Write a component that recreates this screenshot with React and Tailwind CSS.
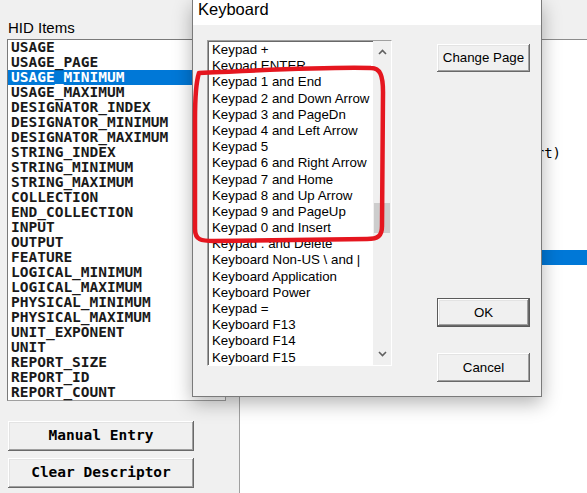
import React from 'react';

const HID_ITEMS = [
  'USAGE', 'USAGE_PAGE', 'USAGE_MINIMUM', 'USAGE_MAXIMUM', 'DESIGNATOR_INDEX',
  'DESIGNATOR_MINIMUM', 'DESIGNATOR_MAXIMUM', 'STRING_INDEX', 'STRING_MINIMUM',
  'STRING_MAXIMUM', 'COLLECTION', 'END_COLLECTION', 'INPUT', 'OUTPUT', 'FEATURE',
  'LOGICAL_MINIMUM', 'LOGICAL_MAXIMUM', 'PHYSICAL_MINIMUM', 'PHYSICAL_MAXIMUM',
  'UNIT_EXPONENT', 'UNIT', 'REPORT_SIZE', 'REPORT_ID', 'REPORT_COUNT',
];

const KEY_USAGES = [
  'Keypad +', 'Keypad ENTER', 'Keypad 1 and End', 'Keypad 2 and Down Arrow',
  'Keypad 3 and PageDn', 'Keypad 4 and Left Arrow', 'Keypad 5',
  'Keypad 6 and Right Arrow', 'Keypad 7 and Home', 'Keypad 8 and Up Arrow',
  'Keypad 9 and PageUp', 'Keypad 0 and Insert', 'Keypad . and Delete',
  'Keyboard Non-US \\ and |', 'Keyboard Application', 'Keyboard Power',
  'Keypad =', 'Keyboard F13', 'Keyboard F14', 'Keyboard F15',
];

const mono = { fontFamily: '"DejaVu Sans Mono", monospace' };
const sans = { fontFamily: '"Liberation Sans", Arial, sans-serif' };

// classic raised 3D button face
const bevel =
  'bg-[#f0f0f0] shadow-[inset_-1px_-1px_#696969,inset_1px_1px_#ffffff,inset_-2px_-2px_#a0a0a0,inset_2px_2px_#e3e3e3]';

const Chevron = ({ down }) => (
  <svg width="9" height="6" viewBox="0 0 9 6" className={down ? 'rotate-180' : ''}>
    <path d="M1 5 L4.5 1.5 L8 5" fill="none" stroke="#606060" strokeWidth="1.6" />
  </svg>
);

const WinButton = ({ children, isDefault, className = '', style }) => (
  <button
    className={`flex items-center justify-center text-black ${bevel} ${
      isDefault ? 'border border-[#5a5a5a]' : ''
    } ${className}`}
    style={style}
  >
    {children}
  </button>
);

const KeyboardDialog = () => (
  <div className="absolute left-[192px] top-0 flex h-[397px] w-[350px] flex-col border border-t-0 border-[#7a7a7a] bg-[#f0f0f0] shadow-[0_6px_18px_rgba(0,0,0,0.3)]">
    <div className="h-[25px] shrink-0 bg-white pl-[5px] text-[16.5px] leading-[19px] text-black" style={sans}>
      Keyboard
    </div>

    <div className="flex pl-[14px] pt-[15px]">
      <div className="flex h-[326px] w-[185px] overflow-hidden border border-b-white border-l-[#a0a0a0] border-r-white border-t-[#a0a0a0] bg-white shadow-[inset_1px_1px_#696969]">
        <div className="flex-1 pl-[4px] pt-[1px] text-[13.3px] text-black" style={sans}>
          {KEY_USAGES.map((k) => (
            <div key={k} className="h-[16.2px] whitespace-pre leading-[16.2px]">
              {k}
            </div>
          ))}
        </div>
        <div className="flex w-[18px] shrink-0 flex-col bg-[#f0f0f0]">
          <div className="flex h-[17px] items-center justify-center pt-[4px]">
            <Chevron />
          </div>
          <div className="flex-1">
            <div className="mx-[1px] mt-[145px] h-[30px] bg-[#cdcdcd]" />
          </div>
          <div className="flex h-[17px] items-center justify-center pb-[6px]">
            <Chevron down />
          </div>
        </div>
      </div>

      <div className="ml-[45px] flex flex-col pt-[4px] text-[13.3px]" style={sans}>
        <WinButton className="h-[28px] w-[93px]">Change Page</WinButton>
        <WinButton isDefault className="mt-[226px] h-[29px] w-[93px]">OK</WinButton>
        <WinButton className="mt-[26px] h-[29px] w-[93px]">Cancel</WinButton>
      </div>
    </div>
  </div>
);

const App = () => {
  return (
    <div className="relative flex h-[493px] w-[587px] overflow-hidden bg-[#f0f0f0]">
      {/* left side: item picker */}
      <div className="flex w-[240px] shrink-0 flex-col border-r border-[#a0a0a0] pl-[7px] pt-[19px]">
        <div className="h-[20px] pl-[1px] text-[15px] leading-[17px] text-black" style={sans}>
          HID Items
        </div>
        <div className="h-[362px] w-[219px] border border-b-[#a0a0a0] border-l-[#7a7a7a] border-r-[#a0a0a0] border-t-[#7a7a7a] bg-white text-[14.5px] font-bold text-[#1a1a1a]" style={mono}>
          {HID_ITEMS.map((item) => (
            <div
              key={item}
              className={`h-[15px] pl-[3px] leading-[14px] ${
                item === 'USAGE_MINIMUM' ? 'bg-[#0078d7] text-white' : ''
              }`}
            >
              {item}
            </div>
          ))}
        </div>
        <WinButton className="ml-[1px] mt-[20px] h-[30px] w-[186px] text-[14.5px] font-bold text-[#1a1a1a]" style={mono}>
          Manual Entry
        </WinButton>
        <WinButton className="ml-[1px] mt-[7px] h-[30px] w-[186px] text-[14.5px] font-bold text-[#1a1a1a]" style={mono}>
          Clear Descriptor
        </WinButton>
      </div>

      {/* right side: descriptor output */}
      <div className="flex flex-1 flex-col bg-white">
        <div className="h-[40px] shrink-0 border-b border-[#8c8c8c] bg-[#f0f0f0]" />
        <div className="mt-[105px] h-[16px] whitespace-pre pl-[262px] text-[14px] leading-[16px] text-black" style={mono}>
          Insert)
        </div>
        <div className="mt-[89px] h-[15px] bg-[#0078d7]" />
      </div>

      <KeyboardDialog />

      {/* hand-drawn marker around the keypad rows */}
      <svg className="pointer-events-none absolute left-0 top-0" width="587" height="493">
        <path
          d="M199 73 C260 70 330 67 371 68 C380 68 383 75 383 92 L382 226 C382 236 378 239 367 239 L214 241 C201 241 195 240 195 229 L195 120 C195 96 196 82 199 73"
          fill="none"
          stroke="#e5161f"
          strokeWidth="4.5"
          strokeLinecap="round"
          strokeLinejoin="round"
        />
      </svg>
    </div>
  );
};

export default App;
